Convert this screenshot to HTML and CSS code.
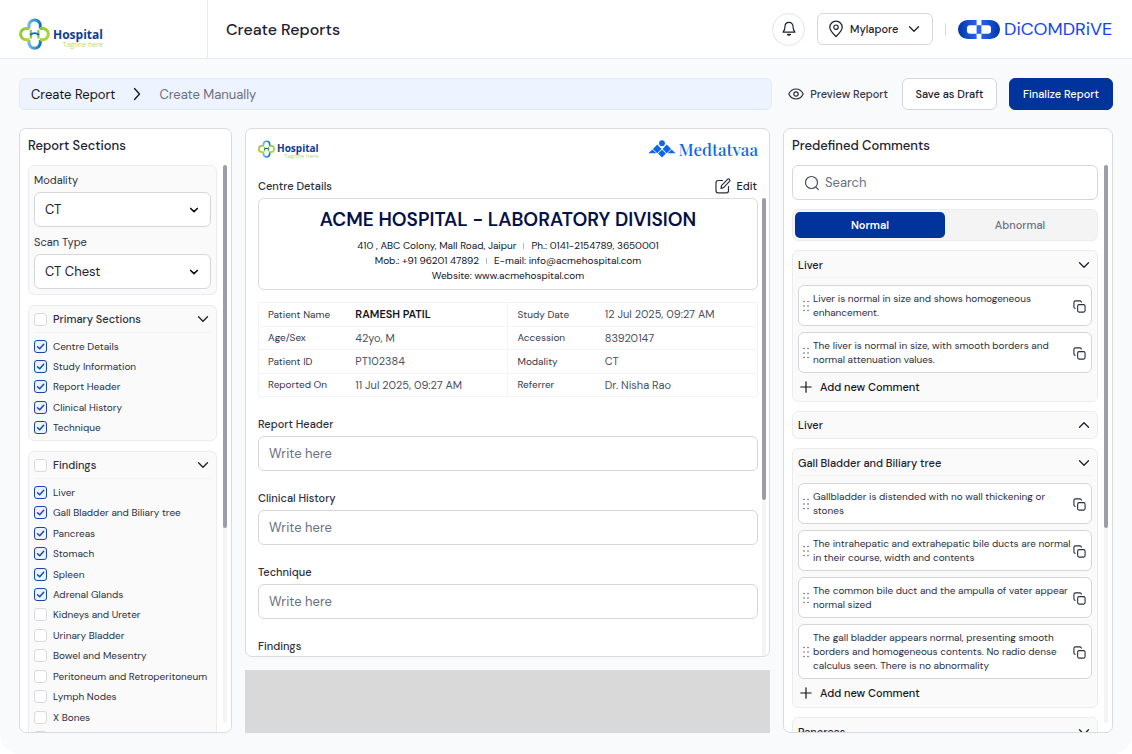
FILE: index.html
```html
<!DOCTYPE html>
<html lang="en">
<head>
<meta charset="utf-8">
<meta name="viewport" content="width=device-width, initial-scale=1">
<title>Create Reports</title>
<link rel="stylesheet" href="styles.css">
</head>
<body>
<svg class="sprite" aria-hidden="true">
  <defs>
    <linearGradient id="blue-grad" x1="0" y1="0" x2="1" y2="0"><stop offset="0" stop-color="#6fb6e6"/><stop offset="1" stop-color="#0b78c2"/></linearGradient>
    <linearGradient id="green-grad" x1="0" y1="0" x2="1" y2="1"><stop offset="0" stop-color="#8cc63f"/><stop offset="1" stop-color="#b5d82f"/></linearGradient>
    <linearGradient id="pill-left" x1="0" y1="0" x2="1" y2="0"><stop offset="0" stop-color="#0034a8"/><stop offset="1" stop-color="#2563f0"/></linearGradient>
    <linearGradient id="pill-right" x1="0" y1="0" x2="1" y2="0"><stop offset="0" stop-color="#2563f0"/><stop offset="1" stop-color="#0034a8"/></linearGradient>
  </defs>
  <symbol id="hospital-mark" viewBox="0 0 31 32">
    <g fill="none" stroke-width="3">
      <path d="M9.9 10.5V7.6a5.7 5.7 0 0 1 11.4 0v2.9" stroke="url(#blue-grad)"/>
      <path d="M9.9 22v2.6a5.7 5.7 0 0 0 11.4 0V22" stroke="url(#blue-grad)"/>
      <path d="M10.5 10.4H7.3a5.6 5.6 0 0 0 0 11.4h3.2" stroke="url(#green-grad)"/>
      <path d="M20.7 10.4h3a5.6 5.6 0 0 1 0 11.4h-3" stroke="url(#green-grad)"/>
      <path d="M11.8 12v8.6M19.4 12v8.6" stroke="#8cc63f" stroke-width="2.2"/>
      <path d="M11.2 17c2.600-2.400 6.200-2.400 8.800 0" stroke="#0b6fb8" stroke-width="2"/>
    </g>
  </symbol>
  <symbol id="chevron-down" viewBox="0 0 12 12"><path d="M1.500 3.800 6 8.300l4.500-4.500" fill="none" stroke="currentColor" stroke-width="1.300" stroke-linecap="round" stroke-linejoin="round"/></symbol>
  <symbol id="chevron-up" viewBox="0 0 12 12"><path d="M1.500 8.200 6 3.700l4.500 4.500" fill="none" stroke="currentColor" stroke-width="1.300" stroke-linecap="round" stroke-linejoin="round"/></symbol>
  <symbol id="grip" viewBox="0 0 6 12"><g fill="#5b6070"><circle cx="1" cy="1.500" r=".8"/><circle cx="5" cy="1.500" r=".8"/><circle cx="1" cy="6" r=".8"/><circle cx="5" cy="6" r=".8"/><circle cx="1" cy="10.500" r=".8"/><circle cx="5" cy="10.500" r=".8"/></g></symbol>
  <symbol id="copy" viewBox="0 0 14 14"><g fill="none" stroke="#2b2f3e" stroke-width="1.200" stroke-linecap="round" stroke-linejoin="round"><rect x="5" y="5" width="8" height="8" rx="1.600"/><path d="M2.300 9A1.500 1.500 0 0 1 1 7.500v-5A1.500 1.500 0 0 1 2.500 1h5A1.500 1.500 0 0 1 9 2.300"/></g></symbol>
  <symbol id="plus" viewBox="0 0 12 12"><path d="M6 .8v10.400M.8 6h10.400" fill="none" stroke="currentColor" stroke-width="1.200" stroke-linecap="round"/></symbol>
</svg>

<div class="app">
  <header class="topbar">
    <div class="topbar-brand">
      <a class="hospital" href="#" aria-label="Hospital home">
        <svg class="hospital-icon"><use href="#hospital-mark"/></svg>
        <span class="hospital-text"><span class="hospital-name">Hospital</span><span class="hospital-tag">Tagline here</span></span>
      </a>
    </div>
    <h1 class="page-title">Create Reports</h1>
    <div class="topbar-tools">
      <button class="bell" type="button" aria-label="Notifications">
        <svg width="16" height="16" viewBox="0 0 16 16" fill="none" stroke="#1d2030" stroke-width="1.200" stroke-linecap="round" stroke-linejoin="round"><path d="M8 1.400C5.500 1.400 4 3.300 4 5.500c0 3.200-1 4.600-1.900 5.700h11.800C13 10.100 12 8.700 12 5.500c0-2.200-1.500-4.100-4-4.100z"/><path d="M6.600 13.400a1.600 1.600 0 0 0 2.800 0z" fill="#1d2030"/></svg>
      </button>
      <button class="location" type="button">
        <svg width="16" height="18" viewBox="0 0 16 18" fill="none" stroke="#1d2030" stroke-width="1.200" stroke-linejoin="round"><path d="M8 1.200c-3.500 0-6.200 2.700-6.200 6.100 0 3.600 3.600 6.500 6.200 9.200 2.600-2.700 6.200-5.600 6.200-9.200 0-3.400-2.700-6.100-6.200-6.100z"/><circle cx="8" cy="7.200" r="2.200"/></svg>
        <span>Mylapore</span>
        <svg class="chev"><use href="#chevron-down"/></svg>
      </button>
      <span class="divider"></span>
      <a class="dicom" href="#" aria-label="DicomDrive">
        <svg width="42" height="19" viewBox="0 0 42 19"><path d="M9.500 0H18.600v5.200H12a3 3 0 0 0-3 3v2.600a3 3 0 0 0 3 3h6.600V19H9.500a9.500 9.500 0 0 1 0-19z" fill="url(#pill-left)"/><path d="M32.500 0H23.400v5.200H30a3 3 0 0 1 3 3v2.600a3 3 0 0 1-3 3h-6.600V19h9.100a9.500 9.500 0 0 0 0-19z" fill="url(#pill-right)"/><path d="M18.600 5.200h4.800v8.600h-4.800z" fill="#2563f0"/></svg>
        <span class="dicom-name">DiCOMDRiVE</span>
      </a>
    </div>
  </header>

  <main class="content">
    <div class="action-row">
      <nav class="breadcrumb" aria-label="Breadcrumb">
        <a class="crumb" href="#">Create Report</a>
        <svg width="8" height="14" viewBox="0 0 8 14" fill="none" stroke="#11131d" stroke-width="1.300" stroke-linecap="round" stroke-linejoin="round"><path d="M1.500 1.500 6.500 7l-5 5.500"/></svg>
        <span class="crumb crumb-current">Create Manually</span>
      </nav>
      <button class="preview" type="button">
        <svg width="16" height="14" viewBox="0 0 16 14" fill="none" stroke="#2b2f3e" stroke-width="1.200"><path d="M.8 7C2.400 3.700 5 2 8 2s5.600 1.700 7.200 5C13.600 10.300 11 12 8 12S2.400 10.300.8 7z"/><circle cx="8" cy="7" r="2.200"/></svg>
        <span>Preview Report</span>
      </button>
      <button class="btn" type="button">Save as Draft</button>
      <button class="btn btn-primary" type="button">Finalize Report</button>
    </div>

    <div class="columns">
      <section class="panel side side-left">
        <h2 class="panel-title">Report Sections</h2>
        <div class="scroller">
          <div class="scroll-body">
            <div class="group selects">
              <label class="field-label" for="modality">Modality</label>
              <div class="select-wrap"><select id="modality"><option>CT</option></select><svg class="select-chev" viewBox="0 0 10 10"><path d="M1.700 3.500 5 6.700l3.300-3.200" fill="none" stroke="#11131d" stroke-width="1.700" stroke-linecap="round" stroke-linejoin="round"/></svg></div>
              <label class="field-label" for="scan">Scan Type</label>
              <div class="select-wrap"><select id="scan"><option>CT Chest</option></select><svg class="select-chev" viewBox="0 0 10 10"><path d="M1.700 3.500 5 6.700l3.300-3.200" fill="none" stroke="#11131d" stroke-width="1.700" stroke-linecap="round" stroke-linejoin="round"/></svg></div>
            </div>
            <div class="group">
              <div class="group-head"><label class="check check-head"><input type="checkbox"><span>Primary Sections</span></label><svg class="chev"><use href="#chevron-down"/></svg></div>
              <div class="checks checks-primary">
                <label class="check"><input type="checkbox" checked><span>Centre Details</span></label>
                <label class="check"><input type="checkbox" checked><span>Study Information</span></label>
                <label class="check"><input type="checkbox" checked><span>Report Header</span></label>
                <label class="check"><input type="checkbox" checked><span>Clinical History</span></label>
                <label class="check"><input type="checkbox" checked><span>Technique</span></label>
              </div>
            </div>
            <div class="group">
              <div class="group-head"><label class="check check-head"><input type="checkbox"><span>Findings</span></label><svg class="chev"><use href="#chevron-down"/></svg></div>
              <div class="checks checks-findings">
                <label class="check"><input type="checkbox" checked><span>Liver</span></label>
                <label class="check"><input type="checkbox" checked><span>Gall Bladder and Biliary tree</span></label>
                <label class="check"><input type="checkbox" checked><span>Pancreas</span></label>
                <label class="check"><input type="checkbox" checked><span>Stomach</span></label>
                <label class="check"><input type="checkbox" checked><span>Spleen</span></label>
                <label class="check"><input type="checkbox" checked><span>Adrenal Glands</span></label>
                <label class="check"><input type="checkbox"><span>Kidneys and Ureter</span></label>
                <label class="check"><input type="checkbox"><span>Urinary Bladder</span></label>
                <label class="check"><input type="checkbox"><span>Bowel and Mesentry</span></label>
                <label class="check"><input type="checkbox"><span>Peritoneum and Retroperitoneum</span></label>
                <label class="check"><input type="checkbox"><span>Lymph Nodes</span></label>
                <label class="check"><input type="checkbox"><span>X Bones</span></label>
                <label class="check"><input type="checkbox" aria-label="More"></label>
              </div>
            </div>
          </div>
          <div class="track"><div class="thumb"></div></div>
        </div>
      </section>

      <div class="center">
        <section class="panel editor">
          <div class="logo-row">
            <div class="hospital hospital-small">
              <svg class="hospital-icon"><use href="#hospital-mark"/></svg>
              <span class="hospital-text"><span class="hospital-name">Hospital</span><span class="hospital-tag">Tagline here</span></span>
            </div>
            <div class="medtatvaa">
              <svg width="28" height="18" viewBox="0 0 28 18" fill="#0a66f0"><circle cx="14" cy="3.200" r="2.900"/><path d="M9.200 4.600 13.500 8.900l-4.300 4.300L4.900 8.900zM18.800 4.600 23.100 8.900l-4.300 4.300L14.500 8.900zM14 9.700l3.900 3.900L14 17.500l-3.900-3.900zM4.400 9.400 8.300 13.300H.4zM23.600 9.400l-3.900 3.900h7.900z"/></svg>
              <span>Medtatvaa</span>
            </div>
          </div>
          <div class="centre-head">
            <h2 class="label">Centre Details</h2>
            <button class="edit" type="button">
              <svg width="16" height="16" viewBox="0 0 16 16" fill="none" stroke="#2b2f3e" stroke-width="1.200" stroke-linecap="round" stroke-linejoin="round"><path d="M7.500 2.500H3A2 2 0 0 0 1 4.500v8.300a2 2 0 0 0 2 2h8.500a2 2 0 0 0 2-2V8.500"/><path d="M6 10.300l.5-2.700 6-6.200a1.300 1.300 0 0 1 2 0 1.400 1.400 0 0 1 0 2L8.600 9.600z"/></svg>
              <span>Edit</span>
            </button>
          </div>
          <div class="scroller editor-scroller">
            <div class="scroll-body editor-body">
              <div class="centre-card">
                <h3>ACME HOSPITAL - LABORATORY DIVISION</h3>
                <p><span>410 , ABC Colony, Mall Road, Jaipur</span><i></i><span>Ph.: 0141-2154789, 3650001</span></p>
                <p><span>Mob.: +91 96201 47892</span><i></i><span>E-mail: info@acmehospital.com</span></p>
                <p>Website: www.acmehospital.com</p>
              </div>
              <table class="patient">
                <tbody>
                  <tr><th scope="row">Patient Name</th><td class="strong">RAMESH PATIL</td><th scope="row">Study Date</th><td>12 Jul 2025, 09:27 AM</td></tr>
                  <tr><th scope="row">Age/Sex</th><td>42yo, M</td><th scope="row">Accession</th><td>83920147</td></tr>
                  <tr><th scope="row">Patient ID</th><td>PT102384</td><th scope="row">Modality</th><td>CT</td></tr>
                  <tr><th scope="row">Reported On</th><td>11 Jul 2025, 09:27 AM</td><th scope="row">Referrer</th><td>Dr. Nisha Rao</td></tr>
                </tbody>
              </table>
              <div class="entry"><label class="label" for="rh">Report Header</label><input id="rh" type="text" placeholder="Write here"></div>
              <div class="entry"><label class="label" for="ch">Clinical History</label><input id="ch" type="text" placeholder="Write here"></div>
              <div class="entry"><label class="label" for="te">Technique</label><input id="te" type="text" placeholder="Write here"></div>
              <div class="entry"><label class="label" for="fi">Findings</label><input id="fi" type="text" placeholder="Write here"></div>
            </div>
            <div class="track"><div class="thumb"></div></div>
          </div>
        </section>
        <div class="placeholder"></div>
      </div>

      <section class="panel side">
        <h2 class="panel-title">Predefined Comments</h2>
        <div class="scroller">
          <div class="scroll-body">
            <div class="search">
              <svg width="16" height="16" viewBox="0 0 16 16" fill="none" stroke="#4b5060" stroke-width="1.200" stroke-linecap="round"><circle cx="7.500" cy="7.500" r="6"/><path d="m12 12.200 2.300 2.300"/></svg>
              <input type="search" placeholder="Search" aria-label="Search">
            </div>
            <div class="tabs"><button class="tab tab-on" type="button">Normal</button><button class="tab" type="button">Abnormal</button></div>
            <div class="group">
              <div class="group-head"><h3>Liver</h3><svg class="chev"><use href="#chevron-down"/></svg></div>
              <div class="cards">
                <div class="card"><svg class="grip"><use href="#grip"/></svg><p>Liver is normal in size and shows homogeneous enhancement.</p><button class="copy" type="button" aria-label="Copy"><svg><use href="#copy"/></svg></button></div>
                <div class="card"><svg class="grip"><use href="#grip"/></svg><p>The liver is normal in size, with smooth borders and normal attenuation values.</p><button class="copy" type="button" aria-label="Copy"><svg><use href="#copy"/></svg></button></div>
              </div>
              <button class="add" type="button"><svg class="chev"><use href="#plus"/></svg><span>Add new Comment</span></button>
            </div>
            <div class="group group-closed">
              <div class="group-head"><h3>Liver</h3><svg class="chev"><use href="#chevron-up"/></svg></div>
            </div>
            <div class="group">
              <div class="group-head"><h3>Gall Bladder and Biliary tree</h3><svg class="chev"><use href="#chevron-down"/></svg></div>
              <div class="cards">
                <div class="card"><svg class="grip"><use href="#grip"/></svg><p>Gallbladder is distended with no wall thickening or stones</p><button class="copy" type="button" aria-label="Copy"><svg><use href="#copy"/></svg></button></div>
                <div class="card"><svg class="grip"><use href="#grip"/></svg><p>The intrahepatic and extrahepatic bile ducts are normal in their course, width and contents</p><button class="copy" type="button" aria-label="Copy"><svg><use href="#copy"/></svg></button></div>
                <div class="card"><svg class="grip"><use href="#grip"/></svg><p>The common bile duct and the ampulla of vater appear normal sized</p><button class="copy" type="button" aria-label="Copy"><svg><use href="#copy"/></svg></button></div>
                <div class="card"><svg class="grip"><use href="#grip"/></svg><p>The gall bladder appears normal, presenting smooth borders and homogeneous contents. No radio dense calculus seen. There is no abnormality</p><button class="copy" type="button" aria-label="Copy"><svg><use href="#copy"/></svg></button></div>
              </div>
              <button class="add" type="button"><svg class="chev"><use href="#plus"/></svg><span>Add new Comment</span></button>
            </div>
            <div class="group">
              <div class="group-head"><h3>Pancreas</h3><svg class="chev"><use href="#chevron-down"/></svg></div>
            </div>
          </div>
          <div class="track"><div class="thumb"></div></div>
        </div>
      </section>
    </div>
  </main>
</div>
</body>
</html>
```

FILE: styles.css
```css
* { box-sizing: border-box; }
html { background: #fff; }
body { margin: 0; font-family: "DM Sans", Inter, "Open Sans", sans-serif; font-size: 11px; color: #1d2030; }
button, input, select { font: inherit; color: inherit; margin: 0; }
button { cursor: pointer; padding: 0; border: 0; background: none; }
a { color: inherit; text-decoration: none; }
h1, h2, h3, p { margin: 0; font-weight: 500; }
svg { flex: none; display: block; }
.sprite { position: absolute; width: 0; height: 0; }
.chev { width: 12px; height: 12px; }

.app { height: 100vh; display: flex; flex-direction: column; background: #f8fafc; border-radius: 0 0 20px 20px; overflow: hidden; }

.topbar { display: flex; align-items: stretch; height: 59px; flex: none; background: #fff; border-bottom: 1px solid #e9eaee; }
.topbar-brand { width: 208px; padding: 10px 0 0 19px; display: flex; align-items: center; border-right: 1px solid #e9eaee; }
.page-title { flex: 1; align-self: center; padding-left: 18px; font-size: 16px; }
.topbar-tools { display: flex; align-items: center; padding-right: 19px; gap: 12px; }
.bell { width: 33px; height: 33px; border: 1px solid #e1e3e8; border-radius: 50%; display: grid; place-items: center; }
.location { width: 116px; height: 32px; border: 1px solid #d4d6da; border-radius: 6px; display: flex; align-items: center; gap: 6px; padding: 0 12px 0 10px; font-weight: 500; }
.location span { flex: 1; text-align: left; }
.divider { width: 1px; height: 13px; background: #d9dbe0; }
.dicom { display: flex; align-items: center; gap: 4px; }
.dicom-name { width: 109px; color: #1044f5; font-size: 18px; line-height: 20px; }

.hospital { display: flex; align-items: center; gap: 3px; }
.hospital-icon { width: 31px; height: 32px; }
.hospital-text { display: flex; flex-direction: column; align-items: flex-end; padding-top: 7px; }
.hospital-name { font: 700 12px/13px "Open Sans", sans-serif; color: #0a3d96; }
.hospital-tag { font: 400 7px/7px "Open Sans", sans-serif; color: #b4dc6c; }
.hospital-small { gap: 2px; }
.hospital-small .hospital-icon { width: 17px; height: 18px; }
.hospital-small .hospital-text { padding-top: 4px; }
.hospital-small .hospital-name { font-size: 10px; line-height: 10px; }
.hospital-small .hospital-tag { font-size: 6px; line-height: 6px; }

.content { flex: 1; min-height: 0; display: flex; flex-direction: column; gap: 18px; padding: 19px 19px 21px; }
.action-row { display: flex; align-items: center; height: 32px; flex: none; }
.breadcrumb { flex: 1; height: 32px; display: flex; align-items: center; gap: 18px; padding: 0 11px; border: 1px solid #e2ebfb; border-radius: 6px; background: #eef4ff; margin-right: 16px; }
.crumb { font-size: 13px; color: #11131d; }
.crumb-current { color: #6b7080; }
.preview { display: flex; align-items: center; gap: 6px; margin-right: 14px; font-weight: 500; color: #343848; }
.btn { height: 32px; width: 95px; border: 1px solid #d4d6da; border-radius: 6px; background: #fff; font-weight: 500; }
.btn-primary { width: 104px; margin-left: 12px; border-color: #00339b; background: #00339b; color: #fff; }

.columns { flex: 1; min-height: 0; display: grid; grid-template-columns: 213px minmax(0, 1fr) 330px; grid-template-rows: minmax(0, 1fr); gap: 13px; }
.panel { display: flex; flex-direction: column; min-height: 0; background: #fff; border: 1px solid #d9dbdf; border-radius: 7px; overflow: hidden; }
.panel-title { padding: 8px 8px 0; font-size: 13px; line-height: 18px; }
.side .scroller { margin-top: 10px; padding: 0 4px 0 8px; gap: 6px; }
.side-left .scroll-body { gap: 10px; }
.scroller { flex: 1; min-height: 0; display: flex; }
.scroll-body { flex: 1; min-width: 0; overflow: hidden; display: flex; flex-direction: column; gap: 9px; }
.scroll-body > * { flex: none; }
.track { width: 4px; margin-bottom: 9px; border-radius: 2px; background: #f4f4f5; }
.thumb { height: 65%; border-radius: 2px; background: #9c9da8; }

.group { border: 1px solid #ececee; border-radius: 6px; background: #fafafa; padding: 0 5px 2px; }
.selects { display: flex; flex-direction: column; padding: 7px 5px 5px; }
.field-label { line-height: 14px; margin-bottom: 5px; color: #2b2f3e; }
.select-wrap { position: relative; }
.select-wrap + .field-label { margin-top: 8px; }
select { appearance: none; display: block; width: 100%; height: 35px; padding: 0 10px; border: 1px solid #d4d6da; border-radius: 6px; background: #fff; font-size: 13px; }
.select-chev { position: absolute; right: 12px; top: 50%; width: 10px; height: 10px; margin-top: -5px; pointer-events: none; }
.group-head { display: flex; align-items: center; justify-content: space-between; height: 27px; padding-top: 1px; padding-right: 2px; border-bottom: 1px solid #f3f3f4; }
.group-head h3 { font-size: 11px; }
.side-left .group-head { padding-top: 0; }
.group-closed { padding-bottom: 0; }
.group-closed .group-head { height: 26px; padding-top: 0; border-bottom: 0; }
.check { display: flex; align-items: center; gap: 6px; font-size: 10px; color: #2b2f3e; }
.check-head { font-size: 11px; font-weight: 500; }
.check input { appearance: none; width: 13px; height: 13px; flex: none; border: 1px solid #d9dade; border-radius: 3px; background: #fff; }
.check input:checked { border-color: #1745ac; background: #eaf1ff url("data:image/svg+xml,%3Csvg xmlns='http://www.w3.org/2000/svg' viewBox='0 0 11 11'%3E%3Cpath d='M2.500 5.700 4.700 7.800 8.700 3.200' fill='none' stroke='%231745ac' stroke-width='1.400' stroke-linecap='round' stroke-linejoin='round'/%3E%3C/svg%3E"); }
.checks { display: grid; grid-auto-rows: 1fr; margin-top: 3px; }
.checks-primary { min-height: 102px; }
.checks-findings { min-height: 266px; }

.center { display: flex; flex-direction: column; gap: 13px; min-height: 0; }
.editor { flex: 1; padding: 10px 3px 0 12px; }
.logo-row { display: flex; align-items: center; justify-content: space-between; height: 20px; padding-right: 8px; }
.medtatvaa { display: flex; align-items: center; gap: 3px; color: #0a66f0; font-family: "Playfair Display", "Liberation Serif", serif; font-size: 17px; font-weight: 500; line-height: 18px; }
.centre-head { display: flex; align-items: center; justify-content: space-between; margin-top: 18px; height: 18px; padding-right: 9px; }
.label { font-size: 11px; line-height: 16px; font-weight: 500; color: #2b2f3e; }
.edit { display: flex; align-items: center; gap: 6px; font-weight: 500; }
.editor-scroller { margin-top: 3px; gap: 4px; }
.editor-scroller .track { margin-bottom: 0; }
.editor-scroller .thumb { height: 66%; }
.editor-body { gap: 0; }
.centre-card { height: 92px; border: 1px solid #d9dbdf; border-radius: 6px; text-align: center; padding-top: 9px; }
.centre-card h3 { font-size: 19px; line-height: 24px; font-weight: 600; color: #04104a; margin-bottom: 6px; }
.centre-card p { font-size: 10px; font-weight: 400; line-height: 15px; display: flex; justify-content: center; align-items: center; gap: 7px; color: #11131d; }
.centre-card i { width: 1px; height: 6px; background: #b7bac2; }
.patient { table-layout: fixed; width: 100%; height: 95px; margin-top: 12px; border-collapse: collapse; border: 1px solid #f4f4f5; text-align: left; }
.patient tr { border-bottom: 1px solid #f4f4f5; }
.patient th { width: 18%; padding: 0 0 0 9px; font-size: 10px; font-weight: 400; color: #343848; }
.patient td { width: 32%; padding: 0 0 0 7px; font-size: 11px; color: #4b5060; }
.patient td:nth-child(2) { border-right: 1px solid #f4f4f5; }
.patient .strong { font-weight: 600; color: #11131d; }
.entry { display: flex; flex-direction: column; gap: 4px; margin-top: 19px; }
.entry input { height: 35px; padding: 0 10px; border: 1px solid #d4d6da; border-radius: 6px; background: #fff; font-size: 13px; }
::placeholder { color: #6b7080; opacity: 1; }
.placeholder { height: 63px; flex: none; background: #d9d9d9; }

.search { display: flex; align-items: center; gap: 5px; height: 35px; padding: 0 11px; border: 1px solid #d4d6da; border-radius: 6px; }
.search input { flex: 1; min-width: 0; padding: 0; border: 0; outline: 0; background: none; font-size: 13px; }
.tabs { display: grid; grid-template-columns: 1fr 1fr; height: 32px; padding: 2px; border: 1px solid #ececee; border-radius: 6px; background: #f4f4f5; }
.tab { border-radius: 5px; font-weight: 500; color: #6b7080; }
.tab-on { background: #00339b; color: #fff; font-weight: 600; }
.cards { display: flex; flex-direction: column; gap: 6px; margin-top: 7px; }
.card { display: flex; align-items: center; padding: 6px 5px 5px 4px; border: 1px solid #d4d6da; border-radius: 6px; background: #fff; }
.card p { flex: 1; font-size: 10px; line-height: 14px; font-weight: 400; color: #2b2f3e; }
.grip { width: 6px; height: 12px; margin-right: 4px; }
.copy svg { width: 13px; height: 13px; }
.add { display: flex; align-items: center; gap: 8px; height: 26px; padding: 2px 0 0 2px; font-weight: 500; color: #11131d; }
```
